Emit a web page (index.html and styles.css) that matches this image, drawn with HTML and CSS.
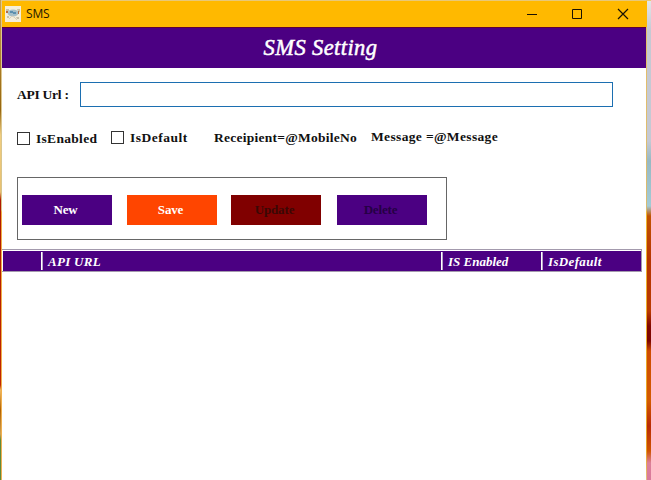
FILE: index.html
```html
<!DOCTYPE html>
<html lang="en">
<head>
<meta charset="utf-8">
<title>SMS</title>
<link rel="stylesheet" href="styles.css">
</head>
<body>
<div class="desktop">
  <main class="window">
    <header class="titlebar">
      <svg class="app-icon" width="16" height="16" viewBox="0 0 16 16">
        <path fill="#f4eedb" d="M0 0h16v16H0z"/>
        <path fill="#c9c1a8" d="M1 3h3v2H1zM12 3h3v3h-2zM2 10h2v2H2zM11 11h3v2h-2z"/>
        <ellipse cx="8" cy="7" rx="5.5" ry="3.5" fill="#a5bfc9"/>
        <path fill="#5c8fae" d="M5 5h3v1h3v2H8V7H5z"/>
        <path fill="#b56b45" d="M1 5h2v2H1zM13 5h1v3h-1z"/>
        <path d="M4 13l3-3 2 1 3 3" fill="none" stroke="#d8cfba"/>
      </svg>
      <span class="title">SMS</span>
      <svg class="controls" width="138" height="26" viewBox="0 0 138 26" fill="none" stroke="#1a1203">
        <path d="M18 13.500h10M63.500 8.500h9v9h-9z"/>
        <path d="M109 8l10 10M119 8l-10 10" stroke-width="1.200"/>
      </svg>
    </header>
    <h1 class="banner"><span>SMS Setting</span></h1>
    <section class="url-row">
      <label for="url">API Url :</label>
      <input id="url" type="text">
    </section>
    <section class="options">
      <label class="enabled"><input type="checkbox"><span>IsEnabled</span></label>
      <label class="default"><input type="checkbox"><span>IsDefault</span></label>
      <span class="recipient">Receipient=@MobileNo</span>
      <span class="message">Message =@Message</span>
    </section>
    <section class="actions">
      <button class="new">New</button>
      <button class="save">Save</button>
      <button class="update" disabled>Update</button>
      <button class="delete" disabled>Delete</button>
    </section>
    <div class="grid-head">
      <span></span><span class="c-url">API URL</span><span class="c-enabled">IS Enabled</span><span class="c-default">IsDefault</span>
    </div>
  </main>
</div>
</body>
</html>
```
FILE: styles.css
```css
* { box-sizing: border-box; }
body {
  margin: 0;
  overflow: hidden;
  font: bold 13.5px/16px "Book Antiqua", "Palatino Linotype", "Liberation Serif", serif;
  color: #111;
}
.desktop {
  height: 480px;
  padding: 1px 5px 0 2px;
  background:
    linear-gradient(#c9a04c, #96650f 110px, #f0cd80 135px, #e8c070 192px, #b01800 200px, #c02500 385px, #f0b860 390px, #b06000 410px, #d0a050 434px, #5d8a3c 440px, #5d8a3c) left / 1px 100% no-repeat,
    linear-gradient(#dfc791, #d8c58b 210px, #f0ae45 212px, #f0b050) 1px 0 / 1px 100% no-repeat,
    linear-gradient(#e8c069, #d9bb70 210px, #efb52d 212px, #e8a022 450px, #e6bd82) right 4px top / 1px 100% no-repeat,
    linear-gradient(#e4e6e7, #c5c9d3 30px, #c5c9d3 140px, #98b9c3 160px, #a3cbd5 205px, #c25300 215px, #b63400 260px, #ba3a00 310px, #820700 325px, #7d0500 340px, #cf4b00 350px, #d35a00 400px, #b92a06 425px, #cf5400 450px, #dc809a 462px, #d9789b) right 0 top 1px / 4px 100% no-repeat,
    #e8c878;
}
.window { height: 479px; background: #fff; }
.titlebar {
  display: flex;
  align-items: center;
  height: 26px;
  margin-right: -1px;
  padding-left: 3px;
  background: #ffb900;
}
.title {
  margin-left: 5px;
  font: 12px/16px "Segoe UI", "Open Sans", sans-serif;
  letter-spacing: -0.2px;
  color: #241800;
}
.controls { margin-left: auto; }
.banner {
  height: 41px;
  margin: 0;
  border-top: 1px solid #620034;
  background: #4b0082;
  color: #fff;
  text-align: center;
  font: italic normal 22.5px/40px "Book Antiqua", "Palatino Linotype", "Liberation Serif", serif;
  letter-spacing: 0.4px;
  -webkit-text-stroke: 0.5px #fff;
  padding-right: 7px;
}
.url-row { display: flex; padding: 14px 0 0 15px; }
.url-row label { width: 63px; padding-top: 5px; letter-spacing: -0.25px; }
.url-row input {
  width: 533px;
  height: 25px;
  border: 1px solid #1c6fb1;
  outline: none;
}
.options { display: flex; height: 70px; padding: 23px 0 0 15px; white-space: nowrap; }
.options label { display: flex; gap: 6px; letter-spacing: 0.3px; }
.options input {
  appearance: none;
  width: 13px;
  height: 13px;
  margin: 1px 0 0;
  border: 1px solid #333;
  background: #fff;
}
.enabled { width: 94px; padding-top: 1px; }
.default { width: 103px; }
.options .default { letter-spacing: 0.5px; }
.recipient { width: 157px; letter-spacing: 0.25px; }
.message { margin-top: -1px; letter-spacing: 0.35px; }
.actions {
  display: flex;
  width: 430px;
  height: 63px;
  margin-left: 15px;
  padding: 17px 4px;
  border: 1px solid #666;
}
.actions button {
  width: 90px;
  height: 30px;
  margin: 0 15px 0 0;
  padding: 0 3px 0 0;
  border: 0;
  font: bold 13px/30px "Book Antiqua", "Palatino Linotype", "Liberation Serif", serif;
  letter-spacing: -0.15px;
  color: #fff;
  background: #4b0082;
}
.actions .save { background: #ff4500; margin-right: 14px; }
.actions .update { background: #800000; color: #3a0805; margin-right: 16px; }
.actions .delete { color: #250045; margin: 0; }
.grid-head {
  display: grid;
  grid-template-columns: 39px 400px 100px 99px;
  grid-template-rows: 20px;
  width: 640px;
  height: 23px;
  margin-top: 9px;
  padding: 1px 0 0 1px;
  border: solid #a39aad;
  border-width: 1px 1px 1px 0;
  font-style: italic;
  font-size: 13px;
  line-height: 22px;
  color: #fff;
}
.grid-head span { height: 20px; background: #4b0082; padding-left: 6px; }
.grid-head span:not(:first-child) {
  margin-left: -1px;
  padding-left: 7px;
  background: linear-gradient(#fff, #fff) 0 1px / 1px 18px no-repeat, linear-gradient(#b7a4c8, #b7a4c8) 1px 1px / 1px 18px no-repeat, #4b0082;
}
.c-url { letter-spacing: 0.3px; }
.c-default { letter-spacing: 0.35px; }
```
